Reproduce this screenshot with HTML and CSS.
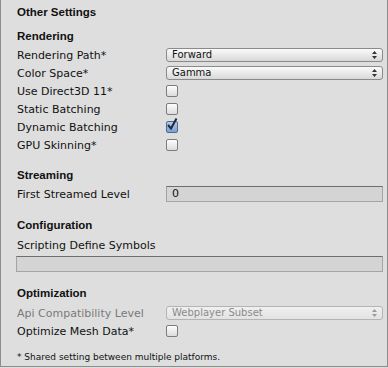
FILE: index.html
```html
<!DOCTYPE html>
<html lang="en">
<head>
    <meta charset="UTF-8">
    <title>Other Settings</title>
    <link rel="stylesheet" href="styles.css">
</head>
<body>

<div class="panel">
    <div class="title">Other Settings</div>

    <div class="section-head first">Rendering</div>
    <div class="rows">
        <div class="row">
            <span class="label">Rendering Path*</span>
            <div class="popup"><span>Forward</span><svg class="arrows" width="5" height="8" viewBox="0 0 5 8"><path d="M2.5 0 L5 3 L0 3 Z M0 5 L5 5 L2.5 8 Z" fill="#333"/></svg></div>
        </div>
        <div class="row">
            <span class="label">Color Space*</span>
            <div class="popup"><span>Gamma</span><svg class="arrows" width="5" height="8" viewBox="0 0 5 8"><path d="M2.5 0 L5 3 L0 3 Z M0 5 L5 5 L2.5 8 Z" fill="#333"/></svg></div>
        </div>
        <div class="row">
            <span class="label">Use Direct3D 11*</span>
            <div class="check"></div>
        </div>
        <div class="row">
            <span class="label">Static Batching</span>
            <div class="check"></div>
        </div>
        <div class="row">
            <span class="label">Dynamic Batching</span>
            <div class="check checked">
                <svg class="tick" width="12" height="14" viewBox="0 0 12 14"><path d="M2 7 L5 10.5 L10.5 0.5" fill="none" stroke="#1c2a3a" stroke-width="2"/></svg>
            </div>
        </div>
        <div class="row">
            <span class="label">GPU Skinning*</span>
            <div class="check"></div>
        </div>
    </div>

    <div class="section-head streaming">Streaming</div>
    <div class="row field-row">
        <span class="label">First Streamed Level</span>
        <div class="field">0</div>
    </div>

    <div class="section-head config">Configuration</div>
    <div class="row">
        <span class="label">Scripting Define Symbols</span>
    </div>
    <div class="field wide"></div>

    <div class="section-head optim">Optimization</div>
    <div class="rows">
        <div class="row">
            <span class="label disabled">Api Compatibility Level</span>
            <div class="popup disabled"><span>Webplayer Subset</span><svg class="arrows" width="5" height="8" viewBox="0 0 5 8"><path d="M2.5 0 L5 3 L0 3 Z M0 5 L5 5 L2.5 8 Z" fill="#999"/></svg></div>
        </div>
        <div class="row">
            <span class="label">Optimize Mesh Data*</span>
            <div class="check"></div>
        </div>
    </div>

    <div class="note">* Shared setting between multiple platforms.</div>
</div>

</body>
</html>
```

FILE: styles.css
```css
body {
    margin: 0;
    background-color: #dedede;
    font-family: "DejaVu Sans", sans-serif;
    font-size: 11px;
    color: #111;
}
.panel {
    box-sizing: border-box;
    width: 388px;
    height: 367px;
    padding: 4px 4px 0 16px;
    border: 1px solid #8c8c8c;
    border-top: none;
    background-color: #dedede;
}
.title,
.section-head {
    font-family: "Liberation Sans", Arial, sans-serif;
    font-weight: bold;
    font-size: 11.5px;
    line-height: 16px;
    height: 16px;
}
.section-head.first {
    margin-top: 8px;
    margin-bottom: 2px;
}
.section-head.streaming {
    margin-top: 13px;
    margin-bottom: 2px;
}
.section-head.config {
    margin-top: 14px;
    margin-bottom: 3px;
}
.section-head.optim {
    margin-top: 13px;
    margin-bottom: 3px;
}
.row {
    display: flex;
    align-items: center;
    height: 18px;
}
.label {
    width: 149px;
    flex-shrink: 0;
}
.label.disabled {
    color: #7a7a7a;
}
.popup {
    box-sizing: border-box;
    flex: 1;
    height: 14px;
    display: flex;
    align-items: center;
    justify-content: space-between;
    padding: 0 5px 0 5px;
    border: 1px solid #8a8a8a;
    border-radius: 3px;
    background: linear-gradient(#fbfbfb, #e6e6e6 60%, #d8d8d8);
    font-size: 10px;
    line-height: 12px;
    color: #111;
}
.popup.disabled {
    border-color: #b4b4b4;
    background: linear-gradient(#f0f0f0, #e2e2e2);
    color: #8a8a8a;
}
.check {
    position: relative;
    box-sizing: border-box;
    width: 12px;
    height: 12px;
    border: 1px solid #7c7c7c;
    border-radius: 2px;
    background: linear-gradient(#fdfdfd, #dcdcdc);
}
.check.checked {
    border-color: #4f6a8f;
    background: linear-gradient(#b6cbea, #7d9fd3);
}
.tick {
    position: absolute;
    left: -1px;
    top: -4px;
}
.field {
    box-sizing: border-box;
    flex: 1;
    height: 16px;
    line-height: 14px;
    padding: 0 5px;
    border: 1px solid #a4a4a4;
    border-top-color: #6e6e6e;
    background-color: #d4d4d4;
    font-size: 11px;
}
.field.wide {
    margin-top: 2px;
    margin-left: -1px;
}
.note {
    margin-top: 10px;
    font-size: 9px;
    line-height: 15px;
}
```
